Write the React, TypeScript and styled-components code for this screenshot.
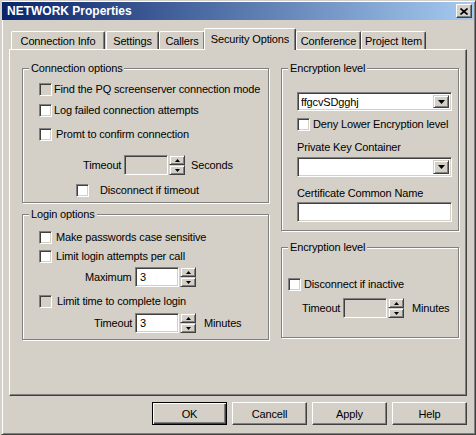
import styled, { createGlobalStyle } from 'styled-components';

const GlobalStyle = createGlobalStyle`
  html, body { margin: 0; padding: 0; background: #d4d0c8; }
  body {
    font-family: "Liberation Sans", Arial, sans-serif;
    font-size: 11px;
    letter-spacing: -0.15px;
    color: #000;
  }
`;

const Window = styled.div`
  box-sizing: border-box;
  width: 475px;
  height: 435px;
  margin-left: 1px;
  padding: 1px 1px 1px 0;
  border: 1px solid;
  border-color: #d4d0c8 #404040 #404040 #d4d0c8;
  box-shadow: inset 1px 1px 0 #fff, inset -1px -1px 0 #808080;
  display: flex;
  flex-direction: column;
`;

const TitleBar = styled.div`
  height: 18px;
  display: flex;
  align-items: center;
  justify-content: space-between;
  padding-left: 5px;
  background: linear-gradient(to right, #0a246a, #a6caf0);
  color: #fff;
  font-weight: bold;
  font-size: 12px;
  letter-spacing: 0;
`;

const CloseBtn = styled.div`
  box-sizing: border-box;
  width: 16px;
  height: 14px;
  margin-right: 2px;
  background: #d4d0c8;
  border: 1px solid;
  border-color: #fff #404040 #404040 #fff;
  box-shadow: inset -1px -1px 0 #808080;
  display: flex;
  align-items: center;
  justify-content: center;
`;

const Body = styled.div`
  padding: 8px 7px 0 7px;
  display: flex;
  flex-direction: column;
`;

const TabStrip = styled.div`
  height: 21px;
  display: flex;
  align-items: flex-end;
  padding-left: 2px;
`;

const Tab = styled.div<{ $w: number; $active?: boolean; $ml?: number }>`
  box-sizing: border-box;
  position: relative;
  width: ${p => p.$w}px;
  height: ${p => (p.$active ? 22 : 18)}px;
  margin-left: ${p => p.$ml ?? 0}px;
  margin-bottom: ${p => (p.$active ? -1 : 0)}px;
  z-index: ${p => (p.$active ? 1 : 0)};
  background: #d4d0c8;
  border-top: 1px solid #fff;
  border-left: 1px solid #fff;
  border-right: 1px solid #404040;
  border-radius: 2px 2px 0 0;
  box-shadow: inset -1px 0 0 #808080;
  display: flex;
  align-items: ${p => (p.$active ? 'flex-start' : 'center')};
  padding-top: ${p => (p.$active ? 4 : 0)}px;
  justify-content: center;
  white-space: nowrap;
`;

const Panel = styled.div`
  box-sizing: border-box;
  height: 347px;
  border: 1px solid;
  border-color: #fff #404040 #404040 #fff;
  box-shadow: inset -1px -1px 0 #808080;
  padding: 18px 0 0 12px;
  display: flex;
  gap: 12px;
`;

const Column = styled.div<{ $gap: number }>`
  display: flex;
  flex-direction: column;
  gap: ${p => p.$gap}px;
`;

const Group = styled.div<{ $w: number; $h: number }>`
  position: relative;
  box-sizing: border-box;
  width: ${p => p.$w}px;
  height: ${p => p.$h}px;
  border: 1px solid #808080;
  box-shadow: 1px 1px 0 #fff, inset 1px 1px 0 #fff;
  display: flex;
  flex-direction: column;
`;

const Legend = styled.span`
  position: absolute;
  top: -7px;
  left: 6px;
  padding: 0 2px;
  line-height: 13px;
  background: #d4d0c8;
  white-space: nowrap;
`;

const Row = styled.div<{ $mt: number; $indent: number; $gap?: number }>`
  display: flex;
  align-items: center;
  margin-top: ${p => p.$mt}px;
  padding-left: ${p => p.$indent}px;
  gap: ${p => p.$gap ?? 3}px;
  line-height: 13px;
  white-space: nowrap;
`;

const Box = styled.span<{ $disabled?: boolean }>`
  box-sizing: border-box;
  flex: none;
  width: 13px;
  height: 13px;
  border: 1px solid;
  border-color: #808080 #fff #fff #808080;
  box-shadow: inset 1px 1px 0 #404040, inset -1px -1px 0 #d4d0c8;
  background: ${p => (p.$disabled ? '#d4d0c8' : '#fff')};
`;

const RowLabel = styled.span<{ $indent: number; $to: number }>`
  box-sizing: border-box;
  width: ${p => p.$to}px;
  padding-left: ${p => p.$indent}px;
`;

const Field = styled.div<{ $w: number; $h?: number; $disabled?: boolean }>`
  box-sizing: border-box;
  width: ${p => p.$w}px;
  height: ${p => p.$h ?? 20}px;
  border: 1px solid;
  border-color: #808080 #fff #fff #808080;
  box-shadow: inset 1px 1px 0 #404040, inset -1px -1px 0 #d4d0c8;
  background: ${p => (p.$disabled ? '#d4d0c8' : '#fff')};
  display: flex;
  align-items: center;
  padding-left: 4px;
`;

const Spinner = styled.div`
  display: flex;
  flex-direction: column;
  margin-left: 1px;
`;

const SpinHalf = styled.div`
  box-sizing: border-box;
  width: 16px;
  height: 10px;
  border: 1px solid;
  border-color: #d4d0c8 #404040 #404040 #d4d0c8;
  box-shadow: inset 1px 1px 0 #fff, inset -1px -1px 0 #808080;
  background: #d4d0c8;
  display: flex;
  align-items: center;
  justify-content: center;
`;

const Unit = styled.span<{ $gap: number }>`
  margin-left: ${p => p.$gap}px;
`;

const Combo = styled.div<{ $h: number }>`
  box-sizing: border-box;
  width: 155px;
  height: ${p => p.$h}px;
  border: 1px solid;
  border-color: #808080 #fff #fff #808080;
  box-shadow: inset 1px 1px 0 #404040, inset -1px -1px 0 #d4d0c8;
  background: #fff;
  display: flex;
  align-items: center;
  justify-content: space-between;
  padding: 2px 2px 2px 3px;
`;

const DropBtn = styled.div`
  box-sizing: border-box;
  width: 16px;
  height: 100%;
  border: 1px solid;
  border-color: #d4d0c8 #404040 #404040 #d4d0c8;
  box-shadow: inset 1px 1px 0 #fff, inset -1px -1px 0 #808080;
  background: #d4d0c8;
  display: flex;
  align-items: center;
  justify-content: center;
`;

const Label = styled.div<{ $mt: number; $indent: number }>`
  margin-top: ${p => p.$mt}px;
  padding-left: ${p => p.$indent}px;
  line-height: 13px;
`;

const Block = styled.div<{ $mt: number; $indent: number }>`
  margin-top: ${p => p.$mt}px;
  padding-left: ${p => p.$indent}px;
`;

const Buttons = styled.div`
  display: flex;
  justify-content: flex-end;
  gap: 5px;
  margin-top: 6px;
`;

const Button = styled.button<{ $default?: boolean }>`
  box-sizing: border-box;
  width: 75px;
  height: 23px;
  padding: 0;
  font: 11px "Liberation Sans", Arial, sans-serif;
  letter-spacing: -0.15px;
  color: #000;
  background: #d4d0c8;
  border: 1px solid;
  border-color: ${p => (p.$default ? '#000' : '#fff #404040 #404040 #fff')};
  box-shadow: ${p =>
    p.$default
      ? 'inset 1px 1px 0 #fff, inset -1px -1px 0 #404040, inset -2px -2px 0 #808080'
      : 'inset -1px -1px 0 #808080'};
`;

function Check({ label, mt, indent, gap, disabled }: { label: string; mt: number; indent: number; gap?: number; disabled?: boolean }) {
  return (
    <Row $mt={mt} $indent={indent} $gap={gap}>
      <Box $disabled={disabled} />
      <span>{label}</span>
    </Row>
  );
}

const Arrow = ({ up }: { up?: boolean }) => (
  <svg width="5" height="3" viewBox="0 0 5 3">
    <path d={up ? 'M2.5 0L5 3H0Z' : 'M0 0H5L2.5 3Z'} fill="#000" />
  </svg>
);

function Spin({ label, value, indent, to, mt, unit, unitGap, disabled }: {
  label: string; value?: string; indent: number; to: number; mt: number; unit?: string; unitGap?: number; disabled?: boolean;
}) {
  return (
    <Row $mt={mt} $indent={0} $gap={0}>
      <RowLabel $indent={indent} $to={to}>{label}</RowLabel>
      <Field $w={44} $disabled={disabled}>{value}</Field>
      <Spinner>
        <SpinHalf><Arrow up /></SpinHalf>
        <SpinHalf><Arrow /></SpinHalf>
      </Spinner>
      {unit && <Unit $gap={unitGap ?? 7}>{unit}</Unit>}
    </Row>
  );
}

function Dropdown({ value, h }: { value?: string; h: number }) {
  return (
    <Combo $h={h}>
      <span>{value}</span>
      <DropBtn>
        <svg width="7" height="4" viewBox="0 0 7 4">
          <path d="M0 0H7L3.5 4Z" fill="#000" />
        </svg>
      </DropBtn>
    </Combo>
  );
}

export default function App() {
  return (
    <>
      <GlobalStyle />
      <Window>
        <TitleBar>
          <span>NETWORK Properties</span>
          <CloseBtn>
            <svg width="8" height="7" viewBox="0 0 8 7">
              <path d="M0.5 0.5L7.5 6.5M7.5 0.5L0.5 6.5" stroke="#000" strokeWidth="1.6" />
            </svg>
          </CloseBtn>
        </TitleBar>

        <Body>
          <TabStrip>
            <Tab $w={94}>Connection Info</Tab>
            <Tab $w={53} $ml={1}>Settings</Tab>
            <Tab $w={46}>Callers</Tab>
            <Tab $w={92} $ml={-1} $active>Security Options</Tab>
            <Tab $w={65}>Conference</Tab>
            <Tab $w={65}>Project Item</Tab>
          </TabStrip>

          <Panel>
            <Column $gap={11}>
              <Group $w={247} $h={135}>
                <Legend>Connection options</Legend>
                <Check mt={14} indent={16} gap={2} disabled label="Find the PQ screenserver connection mode" />
                <Check mt={8} indent={16} gap={2} label="Log failed connection attempts" />
                <Check mt={11} indent={16} gap={4} label="Promt to confirm connection" />
                <Spin mt={14} indent={60} to={101} label="Timeout" unit="Seconds" unitGap={6} disabled />
                <Check mt={9} indent={53} gap={11} label="Disconnect if timeout" />
              </Group>

              <Group $w={247} $h={126}>
                <Legend>Login options</Legend>
                <Check mt={16} indent={16} gap={4} label="Make passwords case sensitive" />
                <Check mt={6} indent={16} gap={4} label="Limit login attempts per call" />
                <Spin mt={4} indent={62} to={112} label="Maximum" value="3" />
                <Check mt={8} indent={16} gap={5} disabled label="Limit time to complete login" />
                <Spin mt={5} indent={71} to={112} label="Timeout" value="3" unit="Minutes" unitGap={8} />
              </Group>
            </Column>

            <Column $gap={16}>
              <Group $w={178} $h={163}>
                <Legend>Encryption level</Legend>
                <Block $mt={23} $indent={15}>
                  <Dropdown value="ffgcvSDgghj" h={19} />
                </Block>
                <Check mt={7} indent={15} gap={3} label="Deny Lower Encryption level" />
                <Label $mt={10} $indent={15}>Private Key Container</Label>
                <Block $mt={3} $indent={15}>
                  <Dropdown h={20} />
                </Block>
                <Label $mt={10} $indent={15}>Certificate Common Name</Label>
                <Block $mt={2} $indent={15}>
                  <Field $w={155} />
                </Block>
              </Group>

              <Group $w={178} $h={91}>
                <Legend>Encryption level</Legend>
                <Check mt={30} indent={6} gap={3} label="Disconnect if inactive" />
                <Spin mt={7} indent={20} to={61} label="Timeout" unit="Minutes" unitGap={8} disabled />
              </Group>
            </Column>
          </Panel>

          <Buttons>
            <Button $default>OK</Button>
            <Button>Cancell</Button>
            <Button>Apply</Button>
            <Button>Help</Button>
          </Buttons>
        </Body>
      </Window>
    </>
  );
}
